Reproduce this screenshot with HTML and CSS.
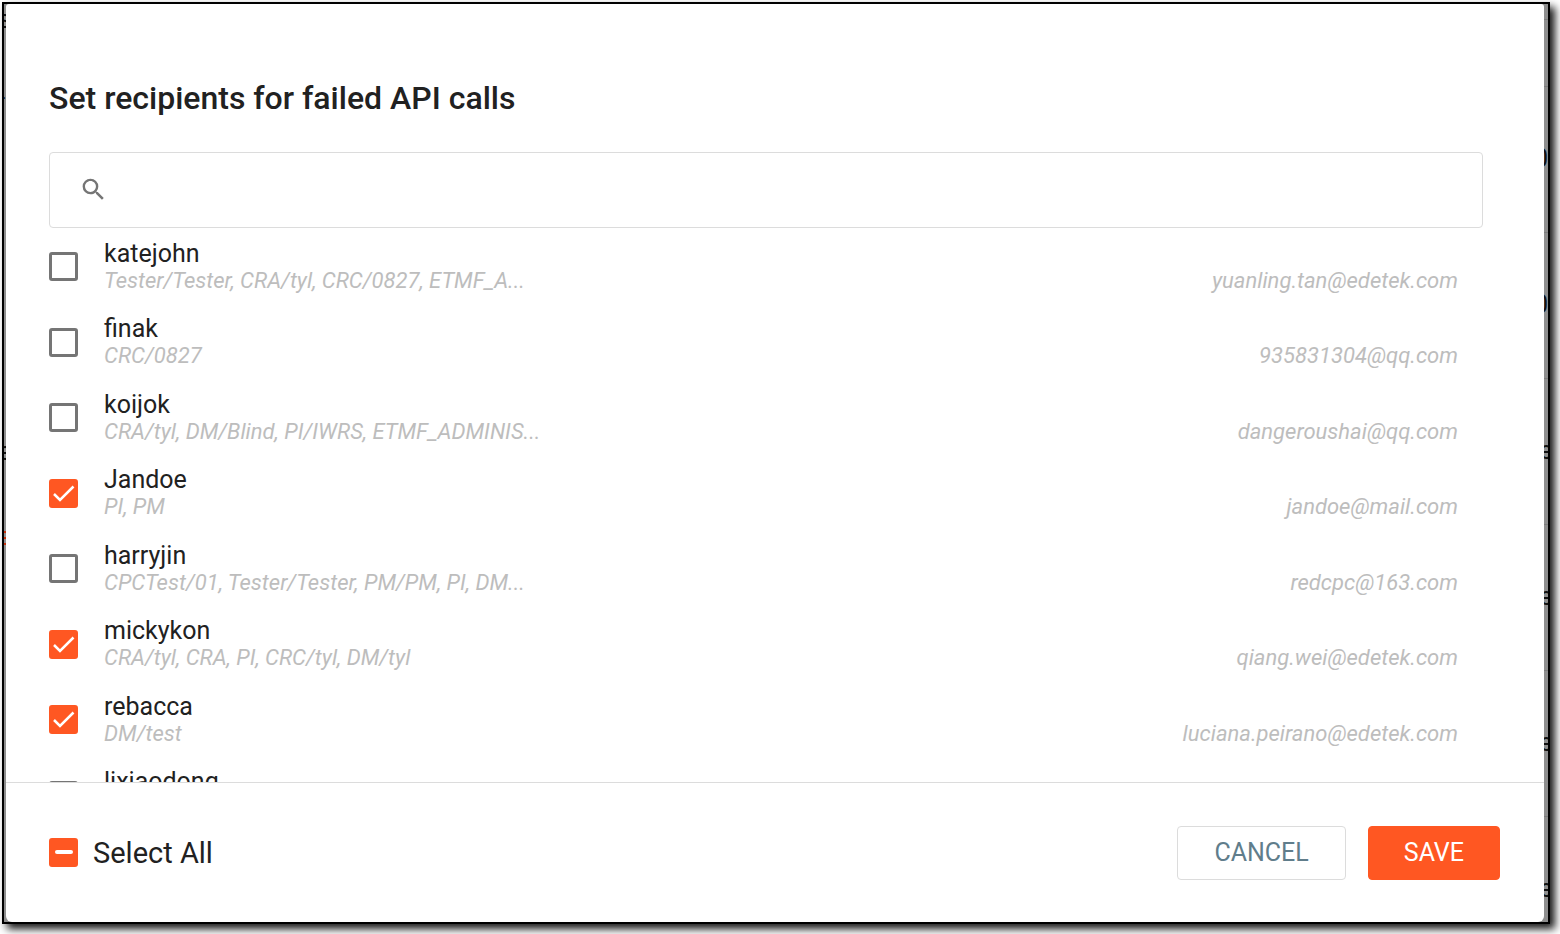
FILE: index.html
```html
<!DOCTYPE html>
<html lang="en">
<head>
    <meta charset="UTF-8">
    <meta name="viewport" content="width=device-width, initial-scale=1.0">
    <title>Set recipients for failed API calls</title>
    <link rel="stylesheet" href="styles.css">
</head>
<body>
    <div class="window">
        <!-- Page behind the dialog -->
        <div class="page-edge page-edge-left" aria-hidden="true">
            <span>s</span>
            <span>-</span>
            <span>e</span>
            <span class="failed">e</span>
            <span class="faint">l</span>
        </div>

        <form class="dialog" id="recipientsForm">
            <div class="dialog-header">
                <h1>Set recipients for failed API calls</h1>
                <div class="search-box">
                    <label for="search">
                        <svg class="search-icon" viewBox="0 0 24 24" role="img" aria-label="Search">
                            <path d="M15.5 14h-.79l-.28-.27A6.471 6.471 0 0 0 16 9.5 6.5 6.5 0 1 0 9.5 16c1.61 0 3.09-.59 4.23-1.57l.27.28v.79l5 4.99L20.49 19l-4.99-5zm-6 0C7.01 14 5 11.99 5 9.5S7.01 5 9.5 5 14 7.01 14 9.5 11.99 14 9.5 14z"/>
                        </svg>
                    </label>
                    <input type="text" id="search" name="search">
                </div>
            </div>

            <div class="recipients">
                <ul class="recipient-list">
                    <li class="recipient">
                        <input type="checkbox" id="katejohn">
                        <label for="katejohn">
                            <span class="name">katejohn</span>
                            <span class="roles">Tester/Tester, CRA/tyl, CRC/0827, ETMF_A...</span>
                            <span class="email">yuanling.tan@edetek.com</span>
                        </label>
                    </li>
                    <li class="recipient">
                        <input type="checkbox" id="finak">
                        <label for="finak">
                            <span class="name">finak</span>
                            <span class="roles">CRC/0827</span>
                            <span class="email">935831304@qq.com</span>
                        </label>
                    </li>
                    <li class="recipient">
                        <input type="checkbox" id="koijok">
                        <label for="koijok">
                            <span class="name">koijok</span>
                            <span class="roles">CRA/tyl, DM/Blind, PI/IWRS, ETMF_ADMINIS...</span>
                            <span class="email">dangeroushai@qq.com</span>
                        </label>
                    </li>
                    <li class="recipient">
                        <input type="checkbox" id="jandoe" checked>
                        <label for="jandoe">
                            <span class="name">Jandoe</span>
                            <span class="roles">PI, PM</span>
                            <span class="email">jandoe@mail.com</span>
                        </label>
                    </li>
                    <li class="recipient">
                        <input type="checkbox" id="harryjin">
                        <label for="harryjin">
                            <span class="name">harryjin</span>
                            <span class="roles">CPCTest/01, Tester/Tester, PM/PM, PI, DM...</span>
                            <span class="email">redcpc@163.com</span>
                        </label>
                    </li>
                    <li class="recipient">
                        <input type="checkbox" id="mickykon" checked>
                        <label for="mickykon">
                            <span class="name">mickykon</span>
                            <span class="roles">CRA/tyl, CRA, PI, CRC/tyl, DM/tyl</span>
                            <span class="email">qiang.wei@edetek.com</span>
                        </label>
                    </li>
                    <li class="recipient">
                        <input type="checkbox" id="rebacca" checked>
                        <label for="rebacca">
                            <span class="name">rebacca</span>
                            <span class="roles">DM/test</span>
                            <span class="email">luciana.peirano@edetek.com</span>
                        </label>
                    </li>
                    <li class="recipient">
                        <input type="checkbox" id="lixiaodong">
                        <label for="lixiaodong">
                            <span class="name">lixiaodong</span>
                        </label>
                    </li>
                </ul>
            </div>

            <div class="dialog-footer">
                <div class="select-all">
                    <input type="checkbox" id="selectAll">
                    <label for="selectAll">Select All</label>
                </div>
                <div class="actions">
                    <button type="button" class="btn btn-cancel">CANCEL</button>
                    <button type="submit" class="btn btn-save">SAVE</button>
                </div>
            </div>
        </form>

        <div class="page-edge page-edge-right" aria-hidden="true">
            <span class="toolbar"></span>
            <span class="table-head"></span>
            <span class="cell number">0</span>
            <span class="cell number">0</span>
            <span class="cell">e</span>
            <span class="cell">e</span>
            <span class="cell">e</span>
            <span class="cell">e</span>
        </div>
    </div>

    <script>
        const selectAll = document.getElementById('selectAll');
        const boxes = document.querySelectorAll('.recipient input');

        // Keep "Select All" in sync with the rows
        function updateSelectAll() {
            const count = [...boxes].filter(box => box.checked).length;
            selectAll.checked = count === boxes.length;
            selectAll.indeterminate = count > 0 && count < boxes.length;
        }

        boxes.forEach(box => box.addEventListener('change', updateSelectAll));

        selectAll.addEventListener('change', () => {
            boxes.forEach(box => box.checked = selectAll.checked);
        });

        document.getElementById('recipientsForm').addEventListener('submit', e => e.preventDefault());

        updateSelectAll();
    </script>
</body>
</html>
```
FILE: styles.css
```css
:root {
    --accent-color: #ff5722;
    --cancel-color: #607d8b;
    --text-color: #212121;
    --muted-color: #bdbdbd;
    --icon-color: #757575;
    --border-color: #dcdcdc;
    --backdrop-color: #8e8e8e;
}

* {
    margin: 0;
    padding: 0;
    box-sizing: border-box;
}

body {
    font-family: Roboto, Arial, sans-serif;
    background-color: white;
    color: var(--text-color);
    height: 100vh;
    padding: 2px 10px 10px 2px;
}

.window {
    display: flex;
    height: 100%;
    border: 2px solid black;
    background-color: var(--backdrop-color);
    box-shadow: 5px 5px 8px rgba(0, 0, 0, 0.9);
}

/* Page behind the dialog */
.page-edge {
    overflow: hidden;
    font-size: 26px;
    line-height: 30px;
    color: #111;
}

.page-edge-left {
    display: grid;
    grid-template-rows: 30px 78px 354px 85px 90px;
    align-items: end;
    justify-content: center;
    align-content: start;
    width: 2px;
}

.failed {
    color: #c62f0b;
}

.faint {
    color: #444;
}

.page-edge-right {
    display: flex;
    flex-direction: column;
    width: 4px;
}

.page-edge-right span {
    flex: none;
    border-bottom: 1px solid #7c7c7c;
}

.toolbar {
    height: 16px;
}

.table-head {
    height: 67px;
}

.cell {
    display: flex;
    align-items: center;
    justify-content: center;
    height: 146px;
    padding-bottom: 4px;
}

.cell.number {
    justify-content: flex-end;
}

.dialog {
    flex: 1;
    min-width: 0;
    display: flex;
    flex-direction: column;
    background-color: white;
    border-radius: 3px 3px 6px 6px;
}

.dialog-header {
    padding: 74px 61px 0 43px;
}

h1 {
    font-size: 32px;
    line-height: 40px;
    font-weight: 500;
    margin-bottom: 34px;
}

.search-box {
    display: flex;
    align-items: center;
    height: 76px;
    padding: 0 29px 2px;
    border: 1px solid var(--border-color);
    border-radius: 4px;
}

.search-icon {
    display: block;
    width: 29px;
    height: 29px;
    fill: var(--icon-color);
}

.search-box input {
    flex: 1;
    height: 100%;
    padding-left: 12px;
    border: none;
    outline: none;
    font: inherit;
    font-size: 25px;
}

input[type="checkbox"] {
    appearance: none;
    flex: none;
    width: 29px;
    height: 29px;
    border: 3px solid var(--icon-color);
    border-radius: 3px;
    background: center / 29px 29px no-repeat;
    cursor: pointer;
}

input[type="checkbox"]:checked,
input[type="checkbox"]:indeterminate {
    border-color: var(--accent-color);
    background-color: var(--accent-color);
}

input[type="checkbox"]:checked {
    background-image: url("data:image/svg+xml,%3Csvg xmlns='http://www.w3.org/2000/svg' viewBox='0 0 29 29'%3E%3Cpath d='M5 15l6 6L24.500 7.500' fill='none' stroke='white' stroke-width='2.500'/%3E%3C/svg%3E");
}

input[type="checkbox"]:indeterminate {
    background-image: url("data:image/svg+xml,%3Csvg xmlns='http://www.w3.org/2000/svg' viewBox='0 0 29 29'%3E%3Crect x='6' y='12' width='18' height='4' rx='2' fill='white'/%3E%3C/svg%3E");
}

.recipients {
    flex: 1;
    min-height: 0;
    overflow: hidden;
    padding: 1px 61px 0 43px;
}

.recipient-list {
    display: flex;
    flex-direction: column;
    min-height: 604px;
    list-style: none;
}

.recipient {
    flex: 1;
    display: flex;
    align-items: center;
    gap: 26px;
    padding-right: 25px;
}

.recipient label {
    flex: 1;
    display: grid;
    grid-template-columns: 1fr auto;
    grid-template-rows: 27px 27px;
    line-height: 27px;
    cursor: pointer;
}

.name {
    grid-column: 1 / -1;
    font-size: 25px;
}

.roles,
.email {
    font-size: 22px;
    font-style: italic;
    color: var(--muted-color);
}

.dialog-footer {
    display: flex;
    align-items: center;
    justify-content: space-between;
    height: 140px;
    padding: 0 44px 0 43px;
    border-top: 1px solid var(--border-color);
}

.select-all {
    display: flex;
    align-items: center;
    gap: 15px;
    font-size: 29px;
}

.actions {
    display: flex;
    gap: 22px;
}

.btn {
    height: 54px;
    padding: 0 36px;
    border: 1px solid var(--border-color);
    border-radius: 4px;
    background-color: white;
    font-family: inherit;
    font-size: 25px;
    cursor: pointer;
}

.btn-cancel {
    color: var(--cancel-color);
}

.btn-save {
    padding: 0 35px;
    border-color: var(--accent-color);
    background-color: var(--accent-color);
    color: white;
}
```
